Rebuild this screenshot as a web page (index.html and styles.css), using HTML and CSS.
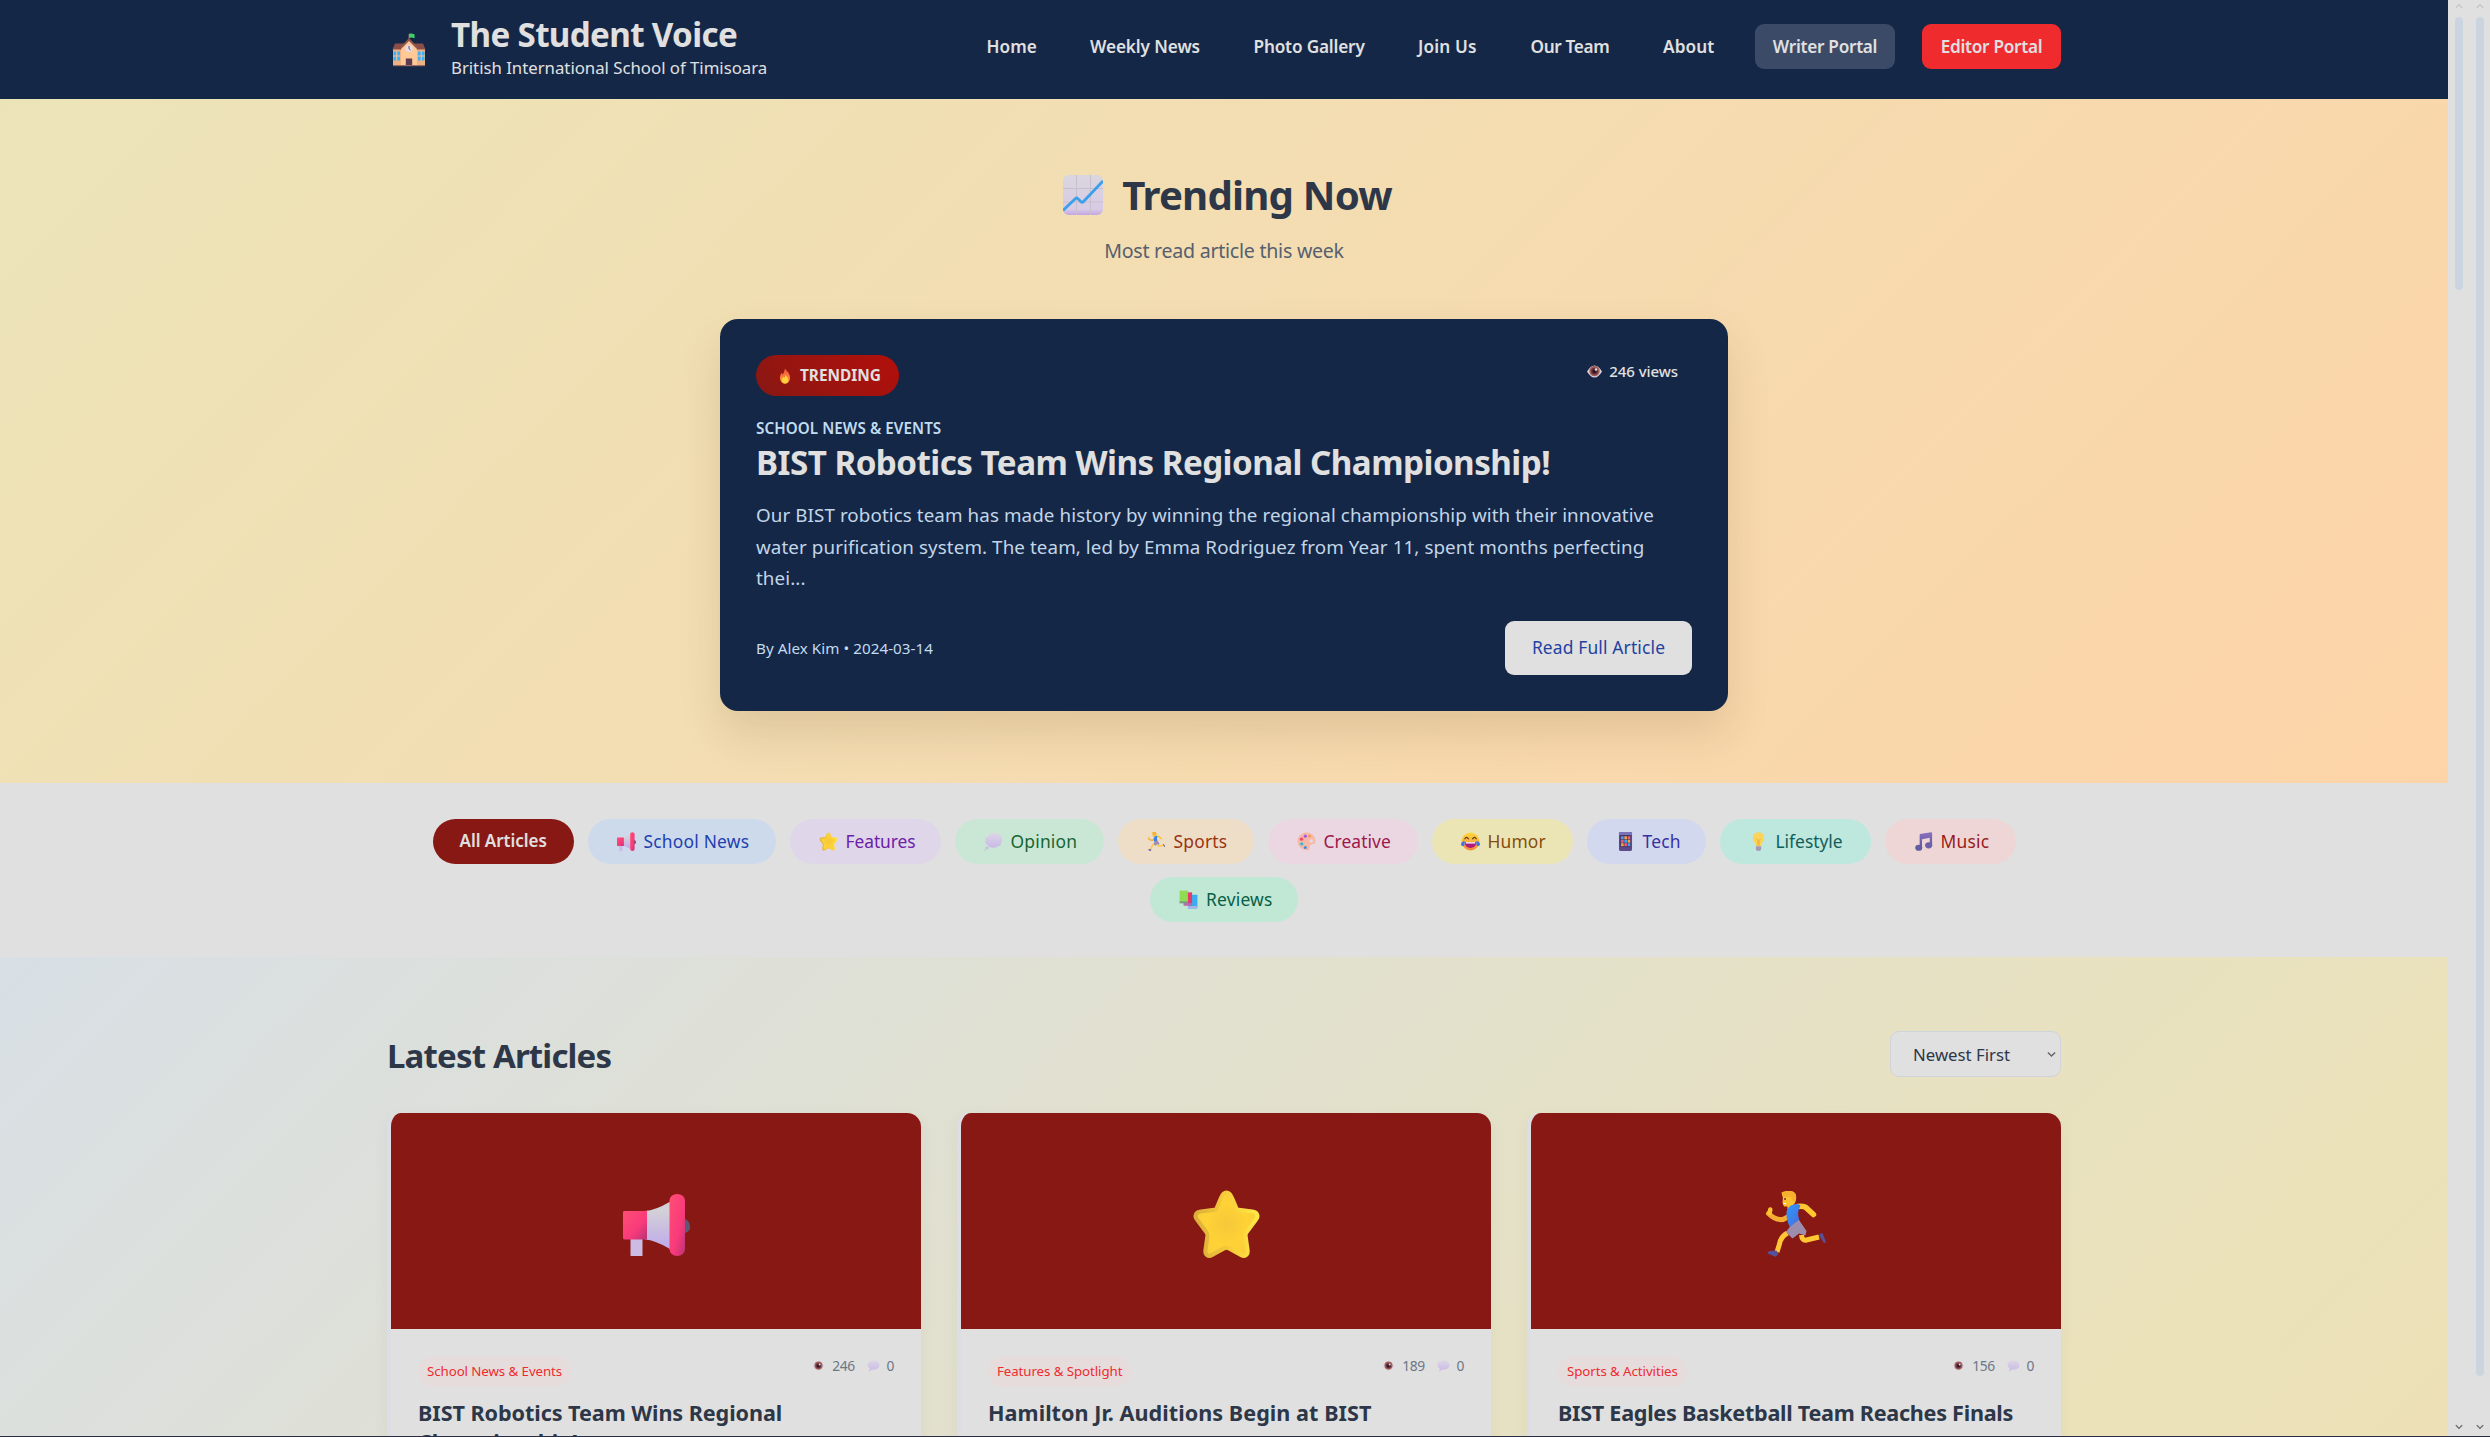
FILE: index.html
```html
<!DOCTYPE html>
<html lang="en">
<head>
<meta charset="utf-8">
<title>The Student Voice</title>
<link rel="stylesheet" href="styles.css">
</head>
<body>
<svg class="defs" width="0" height="0" aria-hidden="true">
  <defs>
    <linearGradient id="gPink" x1="0" y1="0" x2="1" y2="1"><stop offset="0" stop-color="#ff4f74"/><stop offset=".6" stop-color="#f93a7b"/><stop offset="1" stop-color="#b83374"/></linearGradient>
    <linearGradient id="gHorn" x1="0" y1="0" x2="0" y2="1"><stop offset=".2" stop-color="#d3d0d8"/><stop offset="1" stop-color="#bfa9ea"/></linearGradient>
    <radialGradient id="gStar" cx=".5" cy=".5" r=".55"><stop offset="0" stop-color="#f4c83a"/><stop offset=".6" stop-color="#ffd236"/><stop offset="1" stop-color="#f8ce3a"/></radialGradient>
    <linearGradient id="gStarEdge" x1="0" y1=".5" x2="1" y2=".4"><stop offset="0" stop-color="#dcae3a"/><stop offset=".5" stop-color="#f6ca3a"/><stop offset="1" stop-color="#ffe846"/></linearGradient>
    <linearGradient id="gChart" x1="0" y1="0" x2="0" y2="1"><stop offset="0" stop-color="#dad6de"/><stop offset=".85" stop-color="#d8cbe6"/><stop offset="1" stop-color="#c3a4e3"/></linearGradient>
    <linearGradient id="gFire" x1="0" y1="0" x2="0" y2="1"><stop offset="0" stop-color="#f2533f"/><stop offset="1" stop-color="#ff9a34"/></linearGradient>
    <linearGradient id="gBubble" x1="0" y1="0" x2="0" y2="1"><stop offset="0" stop-color="#ddd6e6"/><stop offset="1" stop-color="#c9b9e6"/></linearGradient>
    <linearGradient id="gShirt" x1="0" y1="0" x2="1" y2="1"><stop offset="0" stop-color="#2f9bff"/><stop offset="1" stop-color="#4a68d8"/></linearGradient>
    <linearGradient id="gFace" x1="0" y1="0" x2="0" y2="1"><stop offset="0" stop-color="#ffd83a"/><stop offset="1" stop-color="#f58a3c"/></linearGradient>
    <linearGradient id="gNote" x1="0" y1="0" x2="0" y2="1"><stop offset="0" stop-color="#8a6fc0"/><stop offset="1" stop-color="#5f5aa0"/></linearGradient>

    <symbol id="i-school" viewBox="0 0 34 34">
      <path d="M16.2 1.2h1V8h-1z" fill="#6a4a50"/><path d="M17 .8q2.500-.8 5.600.6V5.200Q19.500 4 17 5z" fill="#3fd06a"/>
      <path d="M1 16h32v17H1z" fill="#efb083"/><path d="M3 10.500h28l2.500 6H.5z" fill="#8a4f48"/>
      <path d="M9 14.500 17 6l8 8.500V33H9z" fill="#ffc996"/><path d="M17 5 8 14.500V17l9-9 9 9v-2.500z" fill="#8f544a"/>
      <circle cx="17" cy="15.500" r="3.600" fill="#e3dceb"/><path d="M17 13v2.700l1.500 1.300" stroke="#6a4a50" fill="none"/>
      <path d="M1.500 18.500h6.500v9H1.500zM26 18.500h6.500v9H26z" fill="#3fb0f4"/><path d="M4.700 18v10M1 23h7M29.200 18v10M26 23h7" stroke="#f6c59b"/>
      <path d="M13.800 25.500h6.400V33h-6.400z" fill="#5d3a52"/><path d="M1 32h32v1.200H1z" fill="#9a6a60"/>
    </symbol>
    <symbol id="i-chart" viewBox="0 0 40 40">
      <rect width="40" height="40" rx="6" fill="url(#gChart)"/>
      <path d="M13.500 0v40M27.500 0v40M0 13.500h40M0 27h40" stroke="#c6c0cd"/>
      <path d="M0 35.500 12.500 23.500Q13.600 22.500 14.700 23.500L18 26.700Q19.200 27.800 20.300 26.700L40 6" fill="none" stroke="#3b9fea" stroke-width="2.800"/>
    </symbol>
    <symbol id="i-fire" viewBox="0 0 24 30">
      <path d="M12 1c2 4 9.500 8 9.500 17A9.500 11 0 0 1 12 29.500 9.500 11 0 0 1 2.500 18c0-4 1.500-6 3.500-9l2 3C10 9 11 5 12 1z" fill="url(#gFire)"/>
      <path d="M13 12c1 3 5 5 5 10.500A6 6.500 0 0 1 12 29a6 6.500 0 0 1-6-6.500c0-3 2-4.500 3-6l1.500 2C12 17 13 15 13 12z" fill="#ffd23c"/>
    </symbol>
    <symbol id="i-eye" viewBox="0 0 32 26">
      <path d="M1 13Q8 1 16 1t15 12q-7 12-15 12T1 13z" fill="#ddd0e0"/><circle cx="16" cy="12" r="10.500" fill="#a0605a"/><circle cx="16" cy="12.500" r="7" fill="#6b2f3c"/><circle cx="16" cy="12.500" r="4" fill="#2a1a26"/><circle cx="19" cy="9" r="2.500" fill="#eadfe8"/>
    </symbol>
    <symbol id="i-mega" viewBox="0 0 67 72" preserveAspectRatio="none">
      <path d="M60 29q6 1 7 8.500T60 46z" fill="#5d5872"/><path d="M7.500 52h12v19q0 1-1 1h-10q-1 0-1-1z" fill="#ccbce4"/>
      <path d="M22 20.500Q32 20 47 10v54Q32 53.500 22 53z" fill="url(#gHorn)"/>
      <path d="M1.500 20.500H24V53H1.500Q0 53 0 51.500V22Q0 20.500 1.500 20.500z" fill="url(#gPink)"/>
      <rect x="46.500" y="1" width="15.500" height="71" rx="7.700" fill="url(#gPink)"/>
    </symbol>
    <symbol id="i-star" viewBox="0 0 67 68">
      <path d="M33.500 3.500c3 0 4.500 3 5.500 5.500l4 9.500c.6 1.300 1 1.600 2.500 1.800l13 1.500c5 .6 6.500 4.500 3.500 8L53 42c-1 1.200-1.200 1.900-1 3.500l2 14c.6 5-3 6.500-6.500 4.500l-11.500-6.300c-1.800-1-3.200-1-5 0L19.500 64c-3.500 2-7 .5-6.500-4.500l2-14c.2-1.600 0-2.300-1-3.500L5 29.800c-3-3.500-1.500-7.400 3.500-8l13-1.500c1.500-.2 1.900-.5 2.500-1.800L28 9c1-2.500 2.500-5.500 5.500-5.500z" fill="url(#gStar)" stroke="url(#gStarEdge)" stroke-width="4" stroke-linejoin="round"/>
    </symbol>
    <symbol id="i-cloud" viewBox="0 0 32 32">
      <path d="M8 5q3-4 8-3 5-2 8 2 6 1 6 7 2 4-1 8-1 5-6 5-4 4-9 2-6 1-8-4-4-2-4-7-1-6 4-7z" fill="url(#gBubble)"/><circle cx="5" cy="27" r="2.600" fill="#c9bddf"/><circle cx="2" cy="30.500" r="1.300" fill="#c9bddf"/>
    </symbol>
    <symbol id="i-bubble" viewBox="0 0 32 30">
      <path d="M16 1C24 1 31 5.500 31 12.500S24 24 16 24q-2 0-4-.4Q9.500 28 4 28.500 7 25 6.500 21.500 1 18 1 12.500C1 5.500 8 1 16 1z" fill="url(#gBubble)"/>
    </symbol>
    <symbol id="i-run" viewBox="0 0 60 66">
      <path d="M2 22.500 Q9 29.500 16.500 28.500L23 25" fill="none" stroke="#f5ab32" stroke-width="5" stroke-linecap="round"/><path d="M3 22l.8-3.500" stroke="#ffc22f" stroke-width="4.500" stroke-linecap="round"/>
      <path d="M31 15.500q7-1 9.500 2l6.500 6" fill="none" stroke="#ffc830" stroke-width="5.500" stroke-linecap="round"/>
      <path d="M16.500 5Q16 .5 22 0q8-.5 7.500 6.500Q30 11 27 14v5l-6-1v-2.500h-3.500L16 12z" fill="#ffc12f"/><path d="M15 1.500Q21-1.500 27 1q3.500 2 2.500 8l-2 3-3-6H16z" fill="#f7b12f"/>
      <circle cx="18.500" cy="8" r="1" fill="#5b3a3a"/><path d="M17 12.500h2.500" stroke="#fff"/>
      <path d="M21 42q-7 4-8 11l-2.500 8" fill="none" stroke="#ffc733" stroke-width="5"/><path d="M35 44q.5 6 5 5l12.500-3" fill="none" stroke="#ffc733" stroke-width="5"/>
      <path d="M20 21q1-6 7-7.500 5-1.500 7 1l-2 5q-1 4 1 10l-9.500 7q-4-8-3.500-15.500z" fill="url(#gShirt)"/>
      <path d="M32.500 29 40 40l-1 4.500-6.500-2L26 47.500 19.500 41q2.500-5 13-12z" fill="#9b8dab"/>
      <path d="M9.800 59.500l2 3L9.500 66 1 62.500Q1 60.500 3 60z" fill="#56509a"/><path d="M52.500 44.500q2.500-3.500 3.700-2L59.500 51q-1 1.500-2.500.5z" fill="#56509a"/>
    </symbol>
    <symbol id="i-palette" viewBox="0 0 32 32">
      <path d="M15 1C24 0 31 7 31 15c0 6-5 4-8 7s1 8-5 9C8 31 1 24 1 16S7 2 15 1z" fill="#f6b9a6"/><circle cx="24" cy="15" r="3" fill="#e9d7e1"/>
      <circle cx="14" cy="7" r="2.800" fill="#a35be0"/><circle cx="7.500" cy="12" r="2.800" fill="#f4476b"/><circle cx="8" cy="20" r="2.800" fill="#35b7d8"/><circle cx="14" cy="26" r="2.600" fill="#3f8de8"/><circle cx="21" cy="7" r="2" fill="#f58b3c"/>
    </symbol>
    <symbol id="i-joy" viewBox="0 0 32 32">
      <circle cx="16" cy="16" r="15" fill="url(#gFace)"/><path d="M6.500 11.500q2.500-5 6 0M19.500 11.500q3.500-5 6 0" fill="none" stroke="#5b3a2a" stroke-width="2" stroke-linecap="round"/>
      <path d="M6.500 17h19q0 10-9.500 10T6.500 17z" fill="#b01a7a"/><path d="M8 17h16v2.500H8z" fill="#f2edf4"/>
      <path d="M0 21q0-5 6-6 1 7-2 9-4 0-4-3zM32 21q0-5-6-6-1 7 2 9 4 0 4-3z" fill="#3f74e8"/>
    </symbol>
    <symbol id="i-phone" viewBox="0 0 32 32">
      <rect x="5" y="0" width="22" height="32" rx="2.500" fill="#5c4a8c"/><path d="M5 3q0-3 3-3h16q3 0 3 3v2H5z" fill="#7a72b8"/>
      <path d="M7.500 5.500h17v20h-17z" fill="#3d2f5c"/><path d="M8.500 7h4.500v5H8.500zM14 13h4.500v5H14zM19.500 19H24v5h-4.500z" fill="#41a0f0"/><path d="M14 7h4.500v5H14zM19.500 13H24v5h-4.500zM8.500 19h4.500v5H8.500z" fill="#f4a04a"/><path d="M19.500 7H24v5h-4.500zM8.500 13h4.500v5H8.500zM14 19h4.500v5H14z" fill="#e8607a"/>
    </symbol>
    <symbol id="i-bulb" viewBox="0 0 32 32">
      <path d="M16 .5c6 0 9.500 4.500 9.500 10 0 6-4.500 7-5 13h-9c-.5-6-5-7-5-13C6.500 5 10 .5 16 .5z" fill="#fbd459"/><path d="M12 11l3 3v9M20 11l-3 3v9" fill="none" stroke="#eda738" stroke-width="1.500"/><path d="M11.500 24h9v4.500q0 3.500-4.500 3.500t-4.500-3.500z" fill="#a49ab4"/>
    </symbol>
    <symbol id="i-note" viewBox="0 0 32 32">
      <path d="M10 3.500 29 .5q1.500 0 1.500 1.500v21h-4V9.500L13.500 12v15h-4V5z" fill="url(#gNote)"/><ellipse cx="8" cy="26.500" rx="6" ry="5.200" fill="#625ca2"/><ellipse cx="24.700" cy="22.500" rx="6" ry="5.200" fill="#6b60aa"/>
    </symbol>
    <symbol id="i-books" viewBox="0 0 32 32">
      <path d="M15 8h15q1 0 1 1v20q0 2-2 2H15z" fill="#36aef0"/><path d="M15 27h16v4H15z" fill="#a9b4e8"/><path d="M8 4h14v22H8z" fill="#e6396c"/><path d="M8 22h14v4H8z" fill="#b46cb0"/><path d="M1 1h14v20H1z" fill="#8fdd55"/><path d="M1 19h14v3.500H1z" fill="#7d9a86"/>
    </symbol>
    <symbol id="i-down" viewBox="0 0 10 7"><path d="M1 1.200 5 5.200 9 1.200" fill="none" stroke="currentColor" stroke-width="1.600"/></symbol>
  </defs>
</svg>

<div class="app">
  <div class="page">
    <header class="site-header">
      <div class="brand">
        <svg class="brand-icon"><use href="#i-school"/></svg>
        <div>
          <div class="brand-name">The Student Voice</div>
          <div class="brand-sub">British International School of Timisoara</div>
        </div>
      </div>
      <nav class="nav">
        <a class="w-home">Home</a><a class="w-weekly">Weekly News</a><a class="w-photo">Photo Gallery</a><a class="w-join">Join Us</a><a class="w-team">Our Team</a><a class="w-about">About</a>
        <a class="btn writer">Writer Portal</a><a class="btn editor">Editor Portal</a>
      </nav>
    </header>

    <section class="hero">
      <h2 class="hero-title"><svg><use href="#i-chart"/></svg><span>Trending Now</span></h2>
      <p class="hero-sub">Most read article this week</p>
      <article class="feature">
        <div class="feature-top">
          <span class="badge"><svg><use href="#i-fire"/></svg>TRENDING</span>
          <span class="views"><svg><use href="#i-eye"/></svg>246 views</span>
        </div>
        <div class="feature-cat">SCHOOL NEWS &amp; EVENTS</div>
        <h3 class="feature-title">BIST Robotics Team Wins Regional Championship!</h3>
        <p class="feature-text">Our BIST robotics team has made history by winning the regional championship with their innovative<br>water purification system. The team, led by Emma Rodriguez from Year 11, spent months perfecting<br>thei...</p>
        <div class="feature-foot"><span class="byline">By Alex Kim • 2024-03-14</span><a class="read">Read Full Article</a></div>
      </article>
    </section>

    <section class="filters">
      <a class="pill all">All Articles</a>
      <a class="pill school"><svg><use href="#i-mega"/></svg>School News</a>
      <a class="pill features"><svg><use href="#i-star"/></svg>Features</a>
      <a class="pill opinion"><svg><use href="#i-cloud"/></svg>Opinion</a>
      <a class="pill sports"><svg><use href="#i-run"/></svg>Sports</a>
      <a class="pill creative"><svg><use href="#i-palette"/></svg>Creative</a>
      <a class="pill humor"><svg><use href="#i-joy"/></svg>Humor</a>
      <a class="pill tech"><svg><use href="#i-phone"/></svg>Tech</a>
      <a class="pill lifestyle"><svg><use href="#i-bulb"/></svg>Lifestyle</a>
      <a class="pill music"><svg><use href="#i-note"/></svg>Music</a>
      <a class="pill reviews"><svg><use href="#i-books"/></svg>Reviews</a>
    </section>

    <section class="latest">
      <div class="latest-head">
        <h2>Latest Articles</h2>
        <div class="select">Newest First<svg><use href="#i-down"/></svg></div>
      </div>
      <div class="cards">
        <article class="card">
          <div class="card-media"><svg class="art-mega"><use href="#i-mega"/></svg></div>
          <div class="card-body">
            <div class="card-meta"><span class="tag">School News &amp; Events</span><span class="stats"><svg class="eye"><use href="#i-eye"/></svg>246<svg class="bub"><use href="#i-bubble"/></svg>0</span></div>
            <h3>BIST Robotics Team Wins Regional Championship!</h3>
          </div>
        </article>
        <article class="card">
          <div class="card-media"><svg class="art-star"><use href="#i-star"/></svg></div>
          <div class="card-body">
            <div class="card-meta"><span class="tag">Features &amp; Spotlight</span><span class="stats"><svg class="eye"><use href="#i-eye"/></svg>189<svg class="bub"><use href="#i-bubble"/></svg>0</span></div>
            <h3 class="t2">Hamilton Jr. Auditions Begin at BIST</h3>
          </div>
        </article>
        <article class="card">
          <div class="card-media"><svg><use href="#i-run"/></svg></div>
          <div class="card-body">
            <div class="card-meta"><span class="tag">Sports &amp; Activities</span><span class="stats"><svg class="eye"><use href="#i-eye"/></svg>156<svg class="bub"><use href="#i-bubble"/></svg>0</span></div>
            <h3 class="t3">BIST Eagles Basketball Team Reaches Finals</h3>
          </div>
        </article>
      </div>
    </section>
  </div>
  <div class="scroll inner"><svg class="up"><use href="#i-down"/></svg><i></i><svg><use href="#i-down"/></svg></div>
  <div class="scroll outer"><svg class="up"><use href="#i-down"/></svg><i></i><svg><use href="#i-down"/></svg></div>
</div>
</body>
</html>
```
FILE: styles.css
```css
* { box-sizing: border-box; margin: 0; padding: 0; }
body { font-family: "Noto Sans", "Open Sans", sans-serif; font-size: 16.8px; color: #2d3748; overflow: hidden; background: #e0e0e0; }
svg { display: block; flex: none; overflow: visible; }
.defs { position: absolute; }
.app { display: flex; height: 1437px; border-bottom: 1px solid #2b2d42; }
.page { width: 2448px; flex: none; height: 1436px; overflow: hidden; }

.site-header { height: 99px; background: #152747; color: #e0e0e0; padding: 0 387px 6px; display: flex; align-items: center; justify-content: space-between; }
.brand { display: flex; align-items: center; padding-top: 3px; }
.brand-icon { width: 34px; height: 34px; margin: 3px 25px 0 5px; }
.brand-name { font-size: 33.200px; font-weight: 700; line-height: 38px; letter-spacing: -.02em; }
.brand-sub { line-height: 27px; white-space: nowrap; letter-spacing: -.001em; }
.nav { display: flex; align-items: center; font-size: 17.200px; font-weight: 600; letter-spacing: -.006em; white-space: nowrap; }
.nav a { margin-right: 53.500px; }
.w-home { width: 50px; letter-spacing: .005em; }
.w-weekly { width: 110px; }
.w-photo { width: 111px; letter-spacing: -.01em; }
.w-join { width: 59px; letter-spacing: .01em; }
.w-team { width: 79px; letter-spacing: -.02em; }
.nav .w-about { width: 52px; letter-spacing: .005em; margin-right: 40px; }
.nav .btn { height: 45px; line-height: 45px; border-radius: 9px; text-align: center; letter-spacing: -.016em; margin: 0; }
.nav .writer { width: 140px; background: #3b4b67; margin-right: 27px; }
.nav .editor { width: 139px; background: #f02b2d; }

.hero { height: 684px; padding-top: 68px; background: linear-gradient(135deg, #ece4b9, #fdd4a8); display: flex; flex-direction: column; align-items: center; }
.hero-title { display: flex; align-items: center; font-size: 40.200px; line-height: 56px; letter-spacing: -.02em; margin-left: 7px; }
.hero-title svg { width: 40px; height: 40px; margin-right: 19px; }
.hero-sub { font-size: 19.600px; line-height: 34px; margin-top: 11px; letter-spacing: -.013em; color: #56606f; }
.feature { width: 1008px; height: 392px; margin-top: 51px; padding: 36px; border-radius: 18px; background: #152747; color: #e0e0e0; box-shadow: 0 22px 44px rgba(80, 50, 10, .13); }
.feature-top { display: flex; justify-content: space-between; height: 41px; }
.badge { width: 143px; height: 41px; border-radius: 21px; background: linear-gradient(45deg, #881813, #b30f0b); display: flex; align-items: center; padding-left: 22px; font-size: 15.400px; font-weight: 700; letter-spacing: -.002em; }
.badge svg { width: 14px; height: 16px; margin-right: 8px; }
.views { display: flex; align-items: center; height: 32px; margin-right: 14px; font-size: 15px; font-weight: 500; letter-spacing: -.004em; }
.views svg { width: 17px; height: 13px; margin-right: 6px; }
.feature-cat { font-size: 15.200px; font-weight: 600; letter-spacing: .005em; line-height: 25px; margin-top: 20px; color: #c2dcf0; }
.feature-title { font-size: 33.200px; line-height: 42px; margin-top: 1px; letter-spacing: -.016em; white-space: nowrap; }
.feature-text { font-size: 18.800px; line-height: 31.700px; letter-spacing: .0045em; margin-top: 16px; color: #c2d6e8; white-space: nowrap; }
.feature-foot { display: flex; justify-content: space-between; align-items: center; margin-top: 26px; }
.byline { font-size: 15.200px; letter-spacing: .003em; color: #c2dcf0; }
.read { width: 187px; height: 54px; line-height: 53px; text-align: center; border-radius: 9px; background: #e0e0e0; color: #1e429f; font-size: 17.400px; letter-spacing: .009em; }

.filters { height: 174px; padding: 36px 387px 0; display: flex; flex-wrap: wrap; justify-content: center; align-content: flex-start; gap: 13px 14px; background: #e0e0e0; }
.pill { height: 45px; line-height: 44px; border-radius: 23px; display: flex; align-items: center; padding: 0 0 1px 29px; font-size: 17.400px; letter-spacing: .012em; white-space: nowrap; }
.pill svg { width: 19px; height: 19px; margin-right: 8px; }
.all { width: 141px; padding-left: 27px; background: #881813; color: #e0e0e0; font-size: 17px; font-weight: 600; letter-spacing: -.002em; }
.school { width: 188px; background: #cddaec; color: #1e40af; }
.features { width: 151px; background: #e0d6ea; color: #6b21a8; letter-spacing: -.004em; }
.opinion { width: 149px; background: #cae7d6; color: #166534; }
.sports { width: 136px; background: #eeddc7; color: #9a3412; }
.creative { width: 150px; background: #ead7e1; color: #9d174d; letter-spacing: .004em; }
.humor { width: 141px; background: #ebe5b5; color: #854d0e; letter-spacing: .008em; }
.tech { width: 119px; background: #d2d8ee; color: #3730a3; }
.lifestyle { width: 151px; background: #bee7de; color: #115e59; letter-spacing: 0; }
.music { width: 131px; background: #eed6d6; color: #991b1b; }
.reviews { width: 148px; background: #c1e7d5; color: #065f46; }

.latest { height: 479px; padding: 74px 387px 0; background: linear-gradient(135deg, #d8dfe5 0, #ebe2b9 1832px, #fdd4a8 3664px); }
.latest-head { display: flex; justify-content: space-between; height: 46px; }
.latest-head h2 { font-size: 33px; line-height: 50px; letter-spacing: -.025em; }
.select { width: 171px; height: 46px; border: 1px solid #cfd3da; border-radius: 9px; background: #e0e0e0; display: flex; align-items: center; justify-content: space-between; padding: 0 4px 0 22px; }
.select svg { width: 9px; height: 7px; color: #666; }
.cards { display: grid; grid-template-columns: repeat(3, 534px); gap: 36px; margin-top: 36px; }
.card { height: 500px; border-left: 4px solid #dcdee3; border-radius: 14px; background: #e0e0e0; overflow: hidden; box-shadow: 0 4px 18px rgba(0, 0, 0, .04); }
.card-media { height: 216px; background: #881813; display: flex; align-items: center; justify-content: center; padding-top: 6px; }
.card-media svg { width: 67px; height: 66px; }
.card-media .art-mega { height: 63px; }
.card-media .art-star { width: 71px; height: 70px; }
.card-body { padding: 27px; }
.card-meta { display: flex; justify-content: space-between; height: 27px; }
.tag { height: 31px; line-height: 31px; padding: 0 9px; border-radius: 16px; background: #e6dcdc; color: #ee2b2f; font-size: 13.300px; letter-spacing: -.006em; }
.stats { display: flex; align-items: center; height: 19px; font-size: 13.800px; letter-spacing: -.035em; color: #6b7785; }
.eye { width: 13px; height: 10px; margin-right: 7px; }
.bub { width: 13px; height: 12px; margin: 0 7px 0 12px; }
.card h3 { font-size: 21.600px; line-height: 29px; letter-spacing: -.003em; margin-top: 15px; }
.card .t2 { letter-spacing: .002em; }
.card .t3 { letter-spacing: -.0127em; white-space: nowrap; }

.scroll { width: 21px; flex: none; height: 1436px; display: flex; flex-direction: column; align-items: center; padding: 3px 0 6px; background: #e0e0e0; color: #666; }
.scroll svg { width: 8px; height: 6px; margin-top: auto; }
.scroll .up { transform: rotate(180deg); color: #c4c4c4; margin: 0 0 8px; }
.scroll i { width: 8px; border-radius: 4px; background: #cbd5e0; }
.inner i { height: 273px; }
.outer i { height: 1359px; }
```
